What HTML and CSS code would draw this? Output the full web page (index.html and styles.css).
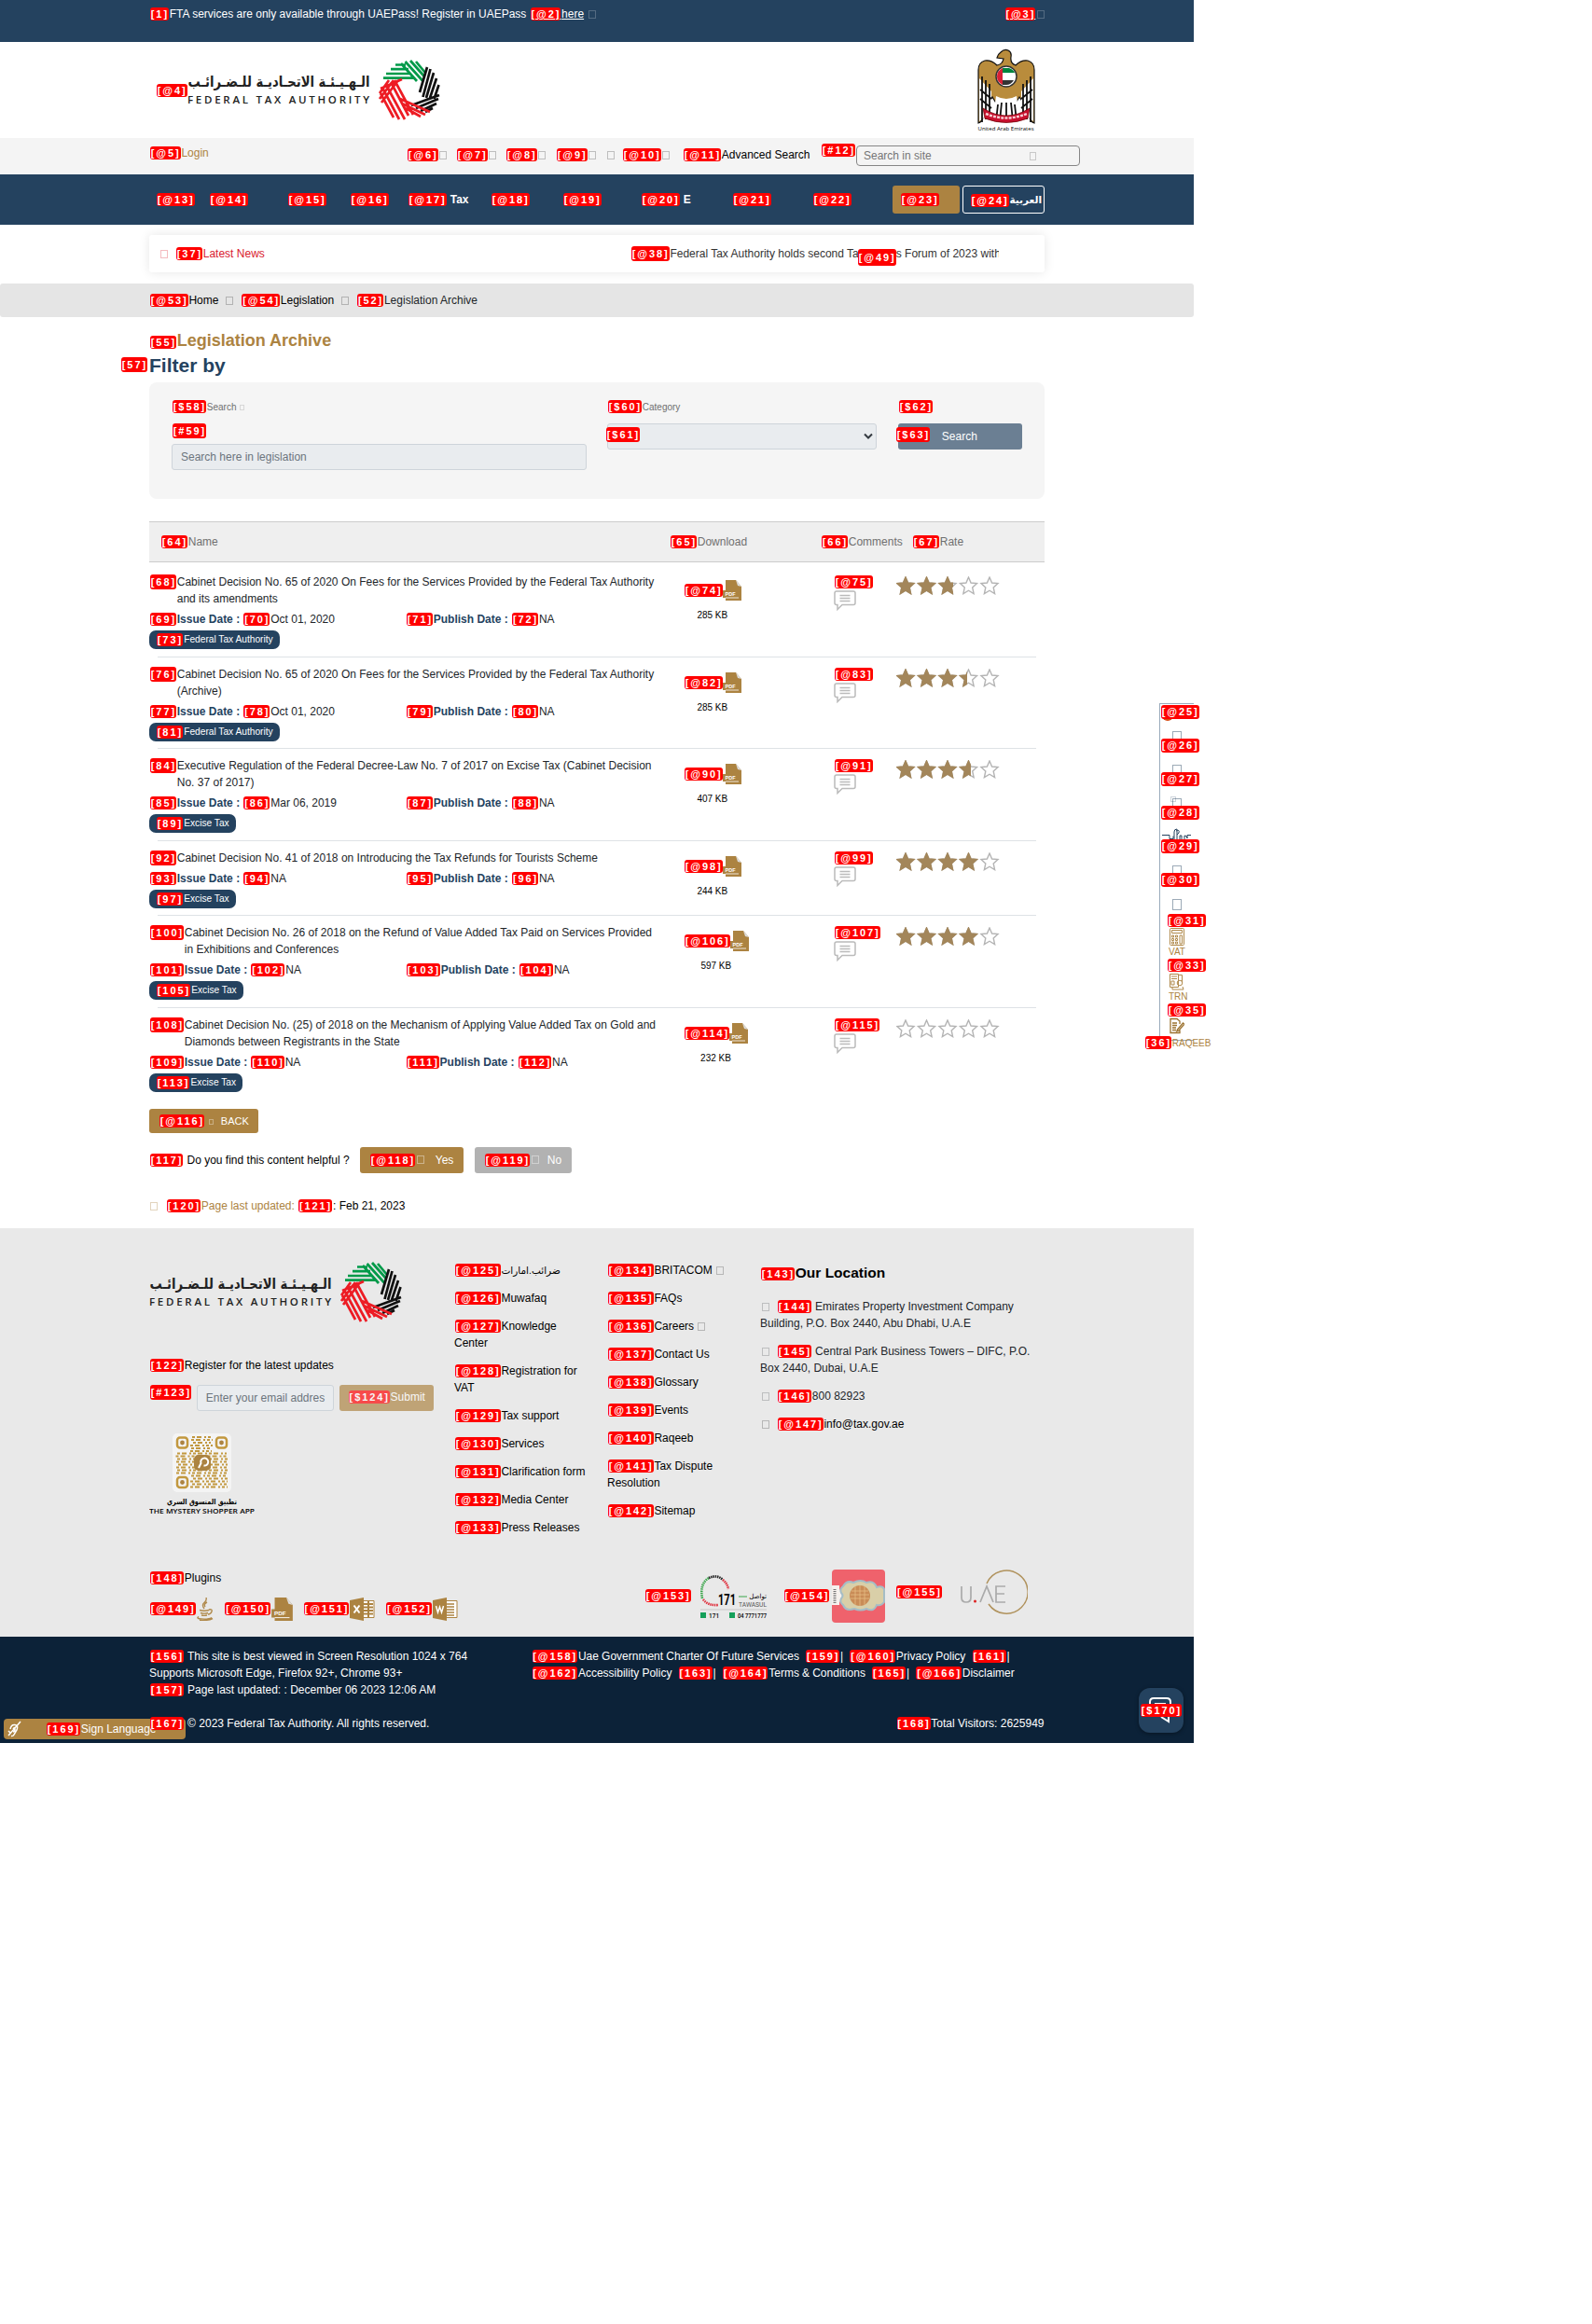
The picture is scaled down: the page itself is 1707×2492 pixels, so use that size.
FILE: index.html
```html
<!DOCTYPE html>
<html lang="en">
<head>
<meta charset="utf-8">
<title>Legislation Archive</title>
<link rel="stylesheet" href="styles.css">
</head>
<body>
<svg class="defs" width="0" height="0">
  <symbol id="logo" viewBox="0 0 271 66">
    <text x="195.500" y="29" class="logo-ar" textLength="195" lengthAdjust="spacingAndGlyphs">الـهـيـئـة الاتحـاديـة للـضـرائـب</text>
    <text x="0" y="47.3" class="logo-en" textLength="195">FEDERAL TAX AUTHORITY</text>
    <g fill="none" stroke-width="2.7">
      <path stroke="#009a49" d="M223 5.500h11M218 10.200h19M213 15h26M210 19.600h33M229 4l17 19M233.500 2l19 21M239 1l15 17M245 2l10 12"/>
      <path stroke="#111" d="M257 8l-8 27M260.500 10l-8 30M264 14l-8 27M267 20l-7 21M269.500 27l-5 15M270 38l-30 11M269 42l-24 10M267 47l-17 8M263 52l-8 4"/>
      <path stroke="#ed1c24" d="M230 21l-23 10M226 22l-18 24M221 22l-15 20M216 22l-10 14M207 36l14 26M209 30l18 34M213 27l20 37M218 24l19 36M222 22l20 37M228 42l32 14M230 47l25 12M234 52l16 9"/>
    </g>
  </symbol>
  <symbol id="pdf" viewBox="0 0 20 22">
    <path fill="#ac8341" d="M3 0h11l6 7v15H3v-3H0v-8h3z"/><path fill="#ddd" d="M14 0l6 7-4-1z"/>
    <path stroke="#fff" stroke-width=".8" d="M3 19h14"/><text x="2.500" y="16.500" class="pdf-t">PDF</text>
  </symbol>
  <symbol id="note" viewBox="0 0 24 22">
    <path fill="#fff" stroke="#bbb" stroke-width="1.500" d="M3 1h18q2 0 2 2v10.500q0 2-2 2H9L4 20.500v-5H3q-2 0-2-2V3q0-2 2-2z"/>
    <path stroke="#bbb" stroke-width="1.500" d="M6.500 5.500h11M6.500 8.500h11M6.500 11.500h11"/>
  </symbol>
  <symbol id="stars" viewBox="0 0 112 20">
    <path id="s" d="M10 1l2.600 6 6.400.6-4.800 4.300 1.400 6.700L10 15.200l-5.600 3.400 1.400-6.700L1 7.600 7.400 7z"/>
    <use href="#s" x="22.500"/><use href="#s" x="45"/><use href="#s" x="67.500"/><use href="#s" x="90"/>
  </symbol>
</svg>

<div class="page">
  <div class="topbar"><div class="wrap topbar-in">
    <div><b class="k">[1]</b>FTA services are only available through UAEPass! Register in UAEPass <a class="under"><b class="k">[@2]</b>here</a> <i class="tofu gap5"></i></div>
    <div class="under"><b class="k">[@3]</b><i class="tofu"></i></div>
  </div></div>

  <div class="brand wrap">
    <div class="brand-left"><b class="k">[@4]</b><svg class="logo"><use href="#logo"/></svg></div>
    <svg class="eagle" viewBox="0 0 62 90">
      <path fill="#b98c3c" stroke="#111" stroke-width="1.200" d="M25 4q4-4 8-2 4 2 3 7-1 7 5 9 6-6 13-5 7 2 7 10v57q-4-1-6-9-4-2-4-10l-6-9-8 13H24l-8-13-5 9q0 8-4 10-2 8-6 9V23q0-8 7-10 7-1 13 5 6-1 7-7l-7-1q1-4 4-6z"/>
      <path fill="#fff" d="M20 51q11 6 22 0l3 22H17zM2 32l13 14v22L2 78zM60 32L47 46v22l13 10z"/>
      <path fill="none" stroke="#111" stroke-width="1.800" d="M5 30v49M9 34v42M13 38v32M57 30v49M53 34v42M49 38v32M22 60l-2 18M26 58l-2 20M31 58v20M36 58l2 20M40 60l2 18M3 44l12 10M3 54l12 10M59 44L47 54M59 54L47 64"/>
      <path fill="#c8102e" stroke="#600" stroke-width=".7" d="M6 64q25 16 50 0l-2 11q-23 9-46 0z"/>
      <path stroke="#f6cdd2" stroke-width="2.500" stroke-dasharray="3 1.200" fill="none" d="M9 70q22 9 44 0"/>
      <circle cx="31" cy="30" r="11" fill="#fff" stroke="#333" stroke-width="1.500"/><path fill="#00843d" d="M27 21h7q5 2 6 5H27z"/><path fill="#333" d="M27 34h12q-3 5-8 5h-4z"/><path fill="#d91f35" d="M27 21v18q-6-3-6-9t6-9z"/>
      <text x="0.500" y="88" class="eagle-t" textLength="60">United Arab Emirates</text>
    </svg>
  </div>

  <div class="utility"><div class="wrap utility-in">
    <span class="gold login"><b class="k">[@5]</b>Login</span>
    <span><b class="k">[@6]</b><i class="tofu"></i></span><span><b class="k">[@7]</b><i class="tofu"></i></span><span><b class="k">[@8]</b><i class="tofu"></i></span><span><b class="k">[@9]</b><i class="tofu"></i></span><span><i class="tofu"></i></span><span><b class="k">[@10]</b><i class="tofu"></i></span><span><b class="k">[@11]</b>Advanced Search</span>
    <span class="k12"><b class="k">[#12]</b></span>
    <div class="site-search"><span>Search in site</span><i class="tofu"></i></div>
  </div></div>

  <div class="nav"><div class="wrap nav-in">
    <span><b class="k">[@13]</b></span><span><b class="k">[@14]</b></span><span><b class="k">[@15]</b></span><span><b class="k">[@16]</b></span><span><b class="k">[@17]</b>&nbsp;Tax</span><span><b class="k">[@18]</b></span><span><b class="k">[@19]</b></span><span><b class="k">[@20]</b>&nbsp;E</span><span><b class="k">[@21]</b></span><span><b class="k">[@22]</b></span>
    <span class="nav-btn gold-btn"><b class="k">[@23]</b></span><span class="nav-btn lang"><b class="k">[@24]</b><bdi>العربية</bdi></span>
  </div></div>

  <div class="news wrap">
    <i class="tofu red"></i><span class="red latest"><b class="k">[37]</b>Latest News</span>
    <div class="ticker"><b class="k tall">[@38]</b>Federal Tax Authority holds second Tax Agents Forum of 2023 with</div>
    <b class="k k49 tall">[@49]</b>
  </div>

  <div class="crumbs"><div class="wrap crumbs-in"><span><b class="k">[@53]</b>Home</span><i class="tofu"></i><span><b class="k">[@54]</b>Legislation</span><i class="tofu"></i><span class="soft"><b class="k">[52]</b>Legislation Archive</span></div></div>

  <main class="wrap">
    <h1><b class="k">[55]</b>Legislation Archive</h1>
    <h2><b class="k tall">[57]</b>Filter by</h2>
    <div class="filter">
      <div class="f1"><label><b class="k">[$58]</b>Search <i class="tofu sm"></i></label><div class="k59"><b class="k tall">[#59]</b></div><div class="field">Search here in legislation</div></div>
      <div class="f2"><label><b class="k">[$60]</b>Category</label><div class="field select"><b class="k tall k61">[$61]</b><svg width="10" height="8"><path d="M1 1.500l4 4 4-4" fill="none" stroke="#343a40" stroke-width="2"/></svg></div></div>
      <div class="f3"><label><b class="k">[$62]</b></label><div class="search-btn"><b class="k tall k61">[$63]</b>Search</div></div>
    </div>

    <div class="thead"><span><b class="k">[64]</b>Name</span><span><b class="k">[65]</b>Download</span><span><b class="k">[66]</b>Comments</span><span><b class="k">[67]</b>Rate</span></div>

    <div class="row">
      <div class="info"><div class="title"><b class="k tall">[68]</b><p>Cabinet Decision No. 65 of 2020 On Fees for the Services Provided by the Federal Tax Authority and its amendments</p></div>
        <div class="dates"><span><b class="k">[69]</b><strong>Issue Date :</strong> <b class="k">[70]</b>Oct 01, 2020</span><span><b class="k">[71]</b><strong>Publish Date :</strong> <b class="k">[72]</b>NA</span></div>
        <span class="pill"><b class="k">[73]</b>Federal Tax Authority</span></div>
      <div class="dl"><div><b class="k">[@74]</b><svg class="pdf"><use href="#pdf"/></svg></div><small>285 KB</small></div>
      <div class="cm"><b class="k">[@75]</b><svg class="note"><use href="#note"/></svg></div>
      <div class="rate"><svg class="st"><use href="#stars"/></svg><div class="fill" style="width:61px"><svg class="st"><use href="#stars"/></svg></div></div>
    </div>
    <div class="row">
      <div class="info"><div class="title"><b class="k tall">[76]</b><p>Cabinet Decision No. 65 of 2020 On Fees for the Services Provided by the Federal Tax Authority (Archive)</p></div>
        <div class="dates"><span><b class="k">[77]</b><strong>Issue Date :</strong> <b class="k">[78]</b>Oct 01, 2020</span><span><b class="k">[79]</b><strong>Publish Date :</strong> <b class="k">[80]</b>NA</span></div>
        <span class="pill"><b class="k">[81]</b>Federal Tax Authority</span></div>
      <div class="dl"><div><b class="k">[@82]</b><svg class="pdf"><use href="#pdf"/></svg></div><small>285 KB</small></div>
      <div class="cm"><b class="k">[@83]</b><svg class="note"><use href="#note"/></svg></div>
      <div class="rate"><svg class="st"><use href="#stars"/></svg><div class="fill" style="width:76px"><svg class="st"><use href="#stars"/></svg></div></div>
    </div>
    <div class="row">
      <div class="info"><div class="title"><b class="k tall">[84]</b><p>Executive Regulation of the Federal Decree-Law No. 7 of 2017 on Excise Tax (Cabinet Decision No. 37 of 2017)</p></div>
        <div class="dates"><span><b class="k">[85]</b><strong>Issue Date :</strong> <b class="k">[86]</b>Mar 06, 2019</span><span><b class="k">[87]</b><strong>Publish Date :</strong> <b class="k">[88]</b>NA</span></div>
        <span class="pill"><b class="k">[89]</b>Excise Tax</span></div>
      <div class="dl"><div><b class="k">[@90]</b><svg class="pdf"><use href="#pdf"/></svg></div><small>407 KB</small></div>
      <div class="cm"><b class="k">[@91]</b><svg class="note"><use href="#note"/></svg></div>
      <div class="rate"><svg class="st"><use href="#stars"/></svg><div class="fill" style="width:80px"><svg class="st"><use href="#stars"/></svg></div></div>
    </div>
    <div class="row short">
      <div class="info"><div class="title"><b class="k tall">[92]</b><p>Cabinet Decision No. 41 of 2018 on Introducing the Tax Refunds for Tourists Scheme</p></div>
        <div class="dates"><span><b class="k">[93]</b><strong>Issue Date :</strong> <b class="k">[94]</b>NA</span><span><b class="k">[95]</b><strong>Publish Date :</strong> <b class="k">[96]</b>NA</span></div>
        <span class="pill"><b class="k">[97]</b>Excise Tax</span></div>
      <div class="dl"><div><b class="k">[@98]</b><svg class="pdf"><use href="#pdf"/></svg></div><small>244 KB</small></div>
      <div class="cm"><b class="k">[@99]</b><svg class="note"><use href="#note"/></svg></div>
      <div class="rate"><svg class="st"><use href="#stars"/></svg><div class="fill" style="width:89px"><svg class="st"><use href="#stars"/></svg></div></div>
    </div>
    <div class="row">
      <div class="info"><div class="title"><b class="k tall">[100]</b><p>Cabinet Decision No. 26 of 2018 on the Refund of Value Added Tax Paid on Services Provided in Exhibitions and Conferences</p></div>
        <div class="dates"><span><b class="k">[101]</b><strong>Issue Date :</strong> <b class="k">[102]</b>NA</span><span><b class="k">[103]</b><strong>Publish Date :</strong> <b class="k">[104]</b>NA</span></div>
        <span class="pill"><b class="k">[105]</b>Excise Tax</span></div>
      <div class="dl"><div><b class="k">[@106]</b><svg class="pdf"><use href="#pdf"/></svg></div><small>597 KB</small></div>
      <div class="cm"><b class="k">[@107]</b><svg class="note"><use href="#note"/></svg></div>
      <div class="rate"><svg class="st"><use href="#stars"/></svg><div class="fill" style="width:89px"><svg class="st"><use href="#stars"/></svg></div></div>
    </div>
    <div class="row last">
      <div class="info"><div class="title"><b class="k tall">[108]</b><p>Cabinet Decision No. (25) of 2018 on the Mechanism of Applying Value Added Tax on Gold and Diamonds between Registrants in the State</p></div>
        <div class="dates"><span><b class="k">[109]</b><strong>Issue Date :</strong> <b class="k">[110]</b>NA</span><span><b class="k">[111]</b><strong>Publish Date :</strong> <b class="k">[112]</b>NA</span></div>
        <span class="pill"><b class="k">[113]</b>Excise Tax</span></div>
      <div class="dl"><div><b class="k">[@114]</b><svg class="pdf"><use href="#pdf"/></svg></div><small>232 KB</small></div>
      <div class="cm"><b class="k">[@115]</b><svg class="note"><use href="#note"/></svg></div>
      <div class="rate"><svg class="st"><use href="#stars"/></svg></div>
    </div>

    <div class="back"><b class="k">[@116]</b><i class="tofu sm"></i><span>BACK</span></div>
    <div class="helpful"><span class="q"><b class="k">[117]</b> Do you find this content helpful ?</span><div class="hb yes"><b class="k">[@118]</b><i class="tofu"></i><span>Yes</span></div><div class="hb no"><b class="k">[@119]</b><i class="tofu"></i><span>No</span></div></div>
    <div class="updated"><i class="tofu gold"></i><span><span class="gold"><b class="k">[120]</b>Page last updated:</span> <b class="k">[121]</b>: Feb 21, 2023</span></div>
  </main>

  <footer>
    <div class="wrap foot">
      <div class="fc1">
        <svg class="logo"><use href="#logo"/></svg>
        <div class="reg"><b class="k">[122]</b>Register for the latest updates</div>
        <div class="mail"><b class="k tall">[#123]</b><div class="field email">Enter your email addres</div><div class="submit"><b class="k">[$124]</b>Submit</div></div>
        <svg class="qr" viewBox="0 0 114 90">
          <rect x="25" y="0" width="63" height="63" rx="5" fill="#f4f4f4"/>
          <g fill="none" stroke="#c2983f" stroke-width="2"><path stroke-dasharray="3 2 5 3 2 2" d="M46 4h20M45 7h23M47 10h19M44 13h24M45 16h20M44 19h23M30 21.500h53M28.500 24.500h55M30 27.500h54M29 30.500h55M31 33.500h53M29 36.500h55M30 39.500h54M29 42.500h54M45 45.500h38M47 48.500h37M44 51.500h40M46 54.500h38M44 57.500h40"/></g>
          <g fill="#f4f4f4" stroke="#c2983f" stroke-width="2.500"><rect x="30" y="4.500" width="11" height="11" rx="3"/><rect x="72" y="4.500" width="11" height="11" rx="3"/><rect x="30" y="47" width="11" height="11" rx="3"/></g>
          <g fill="#ac8341"><circle cx="35.500" cy="10" r="2.400"/><circle cx="77.500" cy="10" r="2.400"/><circle cx="35.500" cy="52.500" r="2.400"/><rect x="48" y="23" width="18" height="17" rx="5"/></g>
          <path d="M53 37l2.500-5a4 4 0 1 1 3 2.500" fill="none" stroke="#fff" stroke-width="2"/>
          <text x="94" y="76" class="qr-ar" textLength="75" lengthAdjust="spacingAndGlyphs">تطبيق المتسوق السري</text>
          <text x="0" y="86" class="qr-en" textLength="113" lengthAdjust="spacingAndGlyphs">THE MYSTERY SHOPPER APP</text>
        </svg>
      </div>
      <ul class="c2"><li class="ar"><b class="k">[@125]</b><bdi>ضرائب.امارات</bdi></li><li><b class="k">[@126]</b>Muwafaq</li><li><b class="k">[@127]</b>Knowledge Center</li><li><b class="k">[@128]</b>Registration for VAT</li><li><b class="k">[@129]</b>Tax support</li><li><b class="k">[@130]</b>Services</li><li><b class="k">[@131]</b>Clarification form</li><li><b class="k">[@132]</b>Media Center</li><li><b class="k">[@133]</b>Press Releases</li></ul>
      <ul class="c3"><li><b class="k">[@134]</b>BRITACOM <i class="tofu"></i></li><li><b class="k">[@135]</b>FAQs</li><li><b class="k">[@136]</b>Careers <i class="tofu"></i></li><li><b class="k">[@137]</b>Contact Us</li><li><b class="k">[@138]</b>Glossary</li><li><b class="k">[@139]</b>Events</li><li><b class="k">[@140]</b>Raqeeb</li><li><b class="k">[@141]</b>Tax Dispute Resolution</li><li><b class="k">[@142]</b>Sitemap</li></ul>
      <div class="c4"><h3><b class="k">[143]</b>Our Location</h3><ul><li><i class="tofu"></i><b class="k">[144]</b> Emirates Property Investment Company Building, P.O. Box 2440, Abu Dhabi, U.A.E</li><li><i class="tofu"></i><b class="k">[145]</b> Central Park Business Towers – DIFC, P.O. Box 2440, Dubai, U.A.E</li><li><i class="tofu"></i><b class="k">[146]</b>800 82923</li><li class="dark"><i class="tofu"></i><b class="k">[@147]</b>info@tax.gov.ae</li></ul></div>
    </div>
    <div class="wrap plugs">
      <div><div><b class="k">[148]</b>Plugins</div>
        <div class="plug-row">
          <span><b class="k">[@149]</b><svg width="19" height="25" viewBox="0 0 19 25" fill="none" stroke="#b08a4c" stroke-width="1.400"><path d="M11 0q1 3-2 5.500T9 12M12 5q-4 2-2 5M4 13.500q5 1.500 10 0M5 16.500q4 1.200 8 0M6 19q3 .8 6 0M14 13q4-1 3 2t-4 3M3 20.500q-3 2 3 2.500 8 .5 11-1.500M4 24.500q9 .5 14-2"/></svg></span>
          <span><b class="k">[@150]</b><svg width="23" height="25"><use href="#pdf"/></svg></span>
          <span><b class="k">[@151]</b><svg width="27" height="25" viewBox="0 0 27 25"><path fill="#fff" stroke="#ac8341" d="M13 3.500h13v18H13z"/><path stroke="#ac8341" stroke-width="2" d="M14 7h11M14 10.500h11M14 14h11M14 17.500h11M20 4v17"/><path fill="#ac8341" d="M0 3l15-3v25L0 22z"/><path stroke="#fff" stroke-width="2" d="M4.500 8.500l6 8M10.500 8.500l-6 8"/></svg></span>
          <span><b class="k">[@152]</b><svg width="27" height="25" viewBox="0 0 27 25"><path fill="#fff" stroke="#ac8341" d="M13 3.500h13v18H13z"/><path stroke="#ac8341" stroke-width="1.500" d="M14 7h9M14 10h9M14 13h9M14 16h9M14 19h9"/><path fill="#ac8341" d="M0 3l15-3v25L0 22z"/><path fill="none" stroke="#fff" stroke-width="1.500" d="M3.500 9l2 7 2-6 2 6 2-7"/></svg></span>
        </div></div>
      <div class="partners">
        <b class="k p1">[@153]</b>
        <svg width="72" height="46" viewBox="0 0 72 46"><g fill="none" stroke-width="2.600" stroke-dasharray="1.500 .8"><path stroke="#3aa54a" d="M2 25Q-1 9 9 3"/><path stroke="#222" d="M9 3q9-4 15 2"/><path stroke="#e0313f" d="M24 5q5 4 6 10M3 26q5 7 16 6"/></g><text x="19" y="32" class="t171" textLength="19" lengthAdjust="spacingAndGlyphs">171</text><path stroke="#3aa54a" d="M41 23h9"/><text x="71" y="25" text-anchor="end" class="t-ar">تواصل</text><text x="41" y="34" class="t-en" textLength="30" lengthAdjust="spacingAndGlyphs">TAWASUL</text><path stroke="#bbb" stroke-width=".7" d="M0 37h71"/><rect y="40" width="6" height="6" fill="#16a05a"/><rect x="31" y="40" width="6" height="6" fill="#16a05a"/><text x="9" y="45.500" class="t-n">171</text><text x="40" y="45.500" class="t-n" textLength="31" lengthAdjust="spacingAndGlyphs">04 7771777</text></svg>
        <b class="k p2">[@154]</b>
        <svg width="57" height="57" viewBox="0 0 57 57"><rect width="57" height="57" rx="4" fill="#ef626c"/><path fill="#f6f1ee" d="M0 17h8v4l6 7-6 7v3H0z"/><path stroke="#777" stroke-width="3" stroke-dasharray="1 1" d="M3 21v15"/><path fill="#d9cfa8" stroke="#a5bdc6" stroke-width="2" d="M12 18q4-7 11-4 8-4 14 0 8-3 11 5 6-2 8 2v14q-3 4-8 3-3 8-11 4-6 3-13 0-9 3-12-4-4-3-2-7 3-3 0-6-2-4 2-7z"/><ellipse cx="30" cy="28" rx="11" ry="11" fill="#c98c57"/><path fill="none" stroke="#e9c389" stroke-width=".7" d="M21 23h18M20 27h20M20 31h20M25 18v20M30 17v22M35 18v20"/></svg>
        <b class="k p3">[@155]</b>
        <svg width="72" height="48" viewBox="0 0 72 48"><path fill="none" stroke="#b0925c" stroke-width="1.500" d="M28 15a23 23 0 1 1 2 22"/><path fill="none" stroke="#aaa" stroke-width="1.700" d="M1 18v12q0 5 5 5t5-5V18M21 35l7-17 7 17M48 18H38v17h10M38 26h9"/><circle cx="15.500" cy="34" r="1.500" fill="#d22"/></svg>
      </div>
    </div>
  </footer>

  <div class="bottom"><div class="wrap bottom-in">
    <div class="b1"><b class="k">[156]</b> This site is best viewed in Screen Resolution 1024 x 764 Supports Microsoft Edge, Firefox 92+, Chrome 93+<br><b class="k">[157]</b> Page last updated: : December 06 2023 12:06 AM</div>
    <div class="b2"><span><b class="k">[@158]</b>Uae Government Charter Of Future Services&nbsp; <b class="k">[159]</b>|&nbsp; <b class="k">[@160]</b>Privacy Policy&nbsp; <b class="k">[161]</b>|</span><br><span><b class="k">[@162]</b>Accessibility Policy&nbsp; <b class="k">[163]</b>|&nbsp; <b class="k">[@164]</b>Terms &amp; Conditions&nbsp; <b class="k">[165]</b>|&nbsp; <b class="k">[@166]</b>Disclaimer</span></div>
    <div class="copy"><b class="k">[167]</b> © 2023 Federal Tax Authority. All rights reserved.</div>
    <div class="visits"><b class="k">[168]</b>Total Visitors: 2625949</div>
  </div></div>

  <div class="sign"><svg width="15" height="18" viewBox="0 0 15 18" fill="none" stroke="#fff" stroke-width="1.500"><path d="M3 9q1-5 5-4.500t2 5.500l-3 5q-1 2-3 1.500M6 9q2-3 2 0t-2 3M1 16L14 1M1 11l2 2"/></svg><span><b class="k">[169]</b>Sign Language</span></div>
  <div class="chat"><svg width="26" height="28" viewBox="0 0 26 28" fill="none" stroke="#fff" stroke-width="2"><path d="M2 14V5q0-4 4-4h14q4 0 4 4v10M7 7h12M14 21l8 5v-6"/></svg><b class="k">[$170]</b></div>

  <div class="side">
    <i class="blob"></i>
    <div class="s"><b class="k">[@25]</b><i class="tofu big"></i></div>
    <div class="s"><b class="k">[@26]</b><i class="tofu big"></i></div>
    <div class="s"><b class="k">[@27]</b><i class="tofu big"></i><i class="tofu tiny"></i></div>
    <div class="s"><b class="k">[@28]</b><svg class="squig" width="32" height="13" viewBox="0 0 32 13" fill="none" stroke="#24425f"><path d="M0 7.500h8v4h4v-3M13 12V4q0-3 3-3v6M15 3q4-2 3 2l-2 2v5M19 12V8h2v4M24 12V8q3 0 3 3v-3.500h4"/></svg></div>
    <div class="s"><b class="k">[@29]</b><i class="tofu big"></i></div>
    <div class="s"><b class="k">[@30]</b><i class="tofu big"></i></div>
    <div class="t"><b class="k">[@31]</b><svg width="16" height="19" viewBox="0 0 16 19" fill="none" stroke="#b08a4c"><rect x=".5" y=".5" width="15" height="18" rx="1"/><path d="M2.500 2.500h11v3h-11zM2.500 8h2v2h-2zM6.500 8h2v2h-2zM2.500 11.500h2v2h-2zM6.500 11.500h2v2h-2zM2.500 15h2v2h-2zM6.500 15h2v2h-2zM11 8h2.500v9H11z"/></svg><span>VAT</span></div>
    <div class="t"><b class="k">[@33]</b><svg width="16" height="19" viewBox="0 0 16 19" fill="none" stroke="#b08a4c"><path d="M.5 1.500h9v14h-9zM2 4h6M2 6.500h6M9.500 2.500h4v8M3 15v3h12l-1-3M2 9h3v4H2z"/><circle cx="11" cy="11" r="2.800"/></svg><span>TRN</span></div>
    <div class="t"><b class="k">[@35]</b><svg width="16" height="19" viewBox="0 0 16 19" fill="none" stroke="#9c7330" stroke-width="1.300"><path d="M11 7V4L8 1.500H1v15h10v-3M3 6h5M3 8.500h5M3 11h4M3 13.500h4M8.500 13l6-7 1.300 1.200-6 7-2 .5z"/></svg></div>
    <div class="raq"><b class="k">[36]</b>RAQEEB</div>
  </div>
</div>
</body>
</html>
```
FILE: styles.css
```css
* { box-sizing: border-box; }
body { margin: 0; background: #fff; color: #000; font: 12px/18px "Liberation Sans", "DejaVu Sans", sans-serif; }
svg { display: block; flex: none; }
.defs { position: absolute; }
ul { list-style: none; margin: 0; padding: 0; }
p { margin: 0; }
.page { position: relative; width: 1280px; height: 1869px; }
.wrap { width: 960px; margin: 0 auto; }

.k { display: inline; background: #f00; color: #fff; font: bold 11px/14px "Liberation Sans", sans-serif; letter-spacing: 1.9px; border-radius: 3px; margin: 0 .8px 0 1px; padding: 1px 0 1px .8px; white-space: nowrap; text-decoration: inherit; }
.k.tall { padding-top: 2px; padding-bottom: 2px; }
.tofu { display: inline-block; width: 8px; height: 9px; border: 1px solid currentColor; opacity: .22; vertical-align: -1px; margin-left: 1px; flex: none; }
.tofu.sm { width: 5px; height: 6px; vertical-align: 0; }
.gap5 { margin-left: 2px; }
.gold { color: #ac8341; }
.red { color: #d9202e; }
.soft { color: #212529; }
.under { text-decoration: underline; }

.topbar { background: #24425f; color: #fff; height: 45px; padding-top: 6px; }
.topbar-in { display: flex; justify-content: space-between; }
.brand { height: 103px; display: flex; justify-content: space-between; align-items: flex-start; padding: 7px 10px 0 7px; }
.brand-left { display: flex; align-items: center; padding-top: 12px; }
.logo { width: 271px; height: 66px; }
.brand-left .k { line-height: 12px; }
.logo-ar { font: bold 16px "DejaVu Sans", sans-serif; fill: #222; direction: rtl; text-anchor: start; }
.logo-en { font: 600 11.500px "Open Sans", sans-serif; fill: #222; }
.eagle { width: 62px; height: 90px; }
.eagle-t { font: 6px "Open Sans", sans-serif; }

.utility { background: #f4f4f4; height: 39px; }
.utility-in { display: grid; grid-template-columns: 276px 53px 53px 54px 54px 17px 65px 148px 38px 240px; padding-top: 8px; height: 39px; line-height: 21px; white-space: nowrap; }
.login { margin-top: -2px; }
.k12 { margin-top: -5px; }
.site-search { border: 1px solid #868686; border-radius: 4px; height: 22px; padding: 0 46px 0 7px; color: #757575; display: flex; justify-content: space-between; align-items: center; }
.site-search .tofu { width: 7px; opacity: .35; }

.nav { background: #24425f; height: 54px; color: #fff; font-weight: bold; }
.nav-in { display: grid; grid-template-columns: 57px 84px 67px 62px 89px 77px 84px 98px 86px 86px 75px 88px; padding-left: 7px; width: 960px; align-items: center; height: 54px; white-space: nowrap; line-height: 14px; }
.nav-btn { height: 30px; border-radius: 3px; padding: 8px; }
.gold-btn { background: #ac8341; width: 72px; }
.lang { border: 1px solid #fff; padding: 0 7px; font-weight: bold; font-size: 10.500px; display: flex; align-items: center; }
.lang .k { line-height: 12px; margin-top: 2px; }
.ar { display: flex; align-items: center; height: 18px; font-size: 10.500px; }
.ar .k { line-height: 12px; margin-top: 1px; }

.news { height: 40px; margin-top: 11px; border-radius: 3px; box-shadow: 0 0 12px rgba(0,0,0,.1); display: flex; align-items: center; padding-left: 11px; position: relative; }
.news .tofu { opacity: .3; }
.latest { margin-left: 8px; width: 488px; }
.ticker { width: 395px; overflow: hidden; white-space: nowrap; color: #333; }
.k49 { position: absolute; left: 759px; top: 15px; }

.crumbs { margin-top: 12px; height: 36px; background: #e5e5e5; border-radius: 3px; }
.crumbs-in { display: flex; align-items: center; height: 36px; }
.crumbs .tofu { margin: 0 8px; }

h1 { margin: 14px 0 0; font-size: 18px; line-height: 22px; color: #ac8341; }
h2 { margin: 3px 0 0 -31px; font-size: 21px; line-height: 26px; color: #24425f; }
h2 .k { vertical-align: 4px; margin-right: 2px; }
.filter { margin-top: 5px; height: 125px; background: #f5f5f5; border-radius: 8px; padding: 17px 24px 0; display: grid; grid-template-columns: 467px 312px 133px; color: #6f6f6f; }
.filter label { display: block; font-size: 10px; height: 27px; line-height: 20px; }
.k59 { height: 22px; line-height: 17px; }
.field { background: #e9ecef; border: 1px solid #ced4da; border-radius: 3px; height: 28px; color: #6c757d; padding: 4px 9px; white-space: nowrap; }
.f1 .field { width: 445px; }
.select { width: 289px; display: flex; justify-content: space-between; align-items: center; padding: 0 3px 0 0; }
.k61 { margin-left: -2px; height: 16px; line-height: 12px; margin-top: -4px; }
.search-btn { height: 28px; border-radius: 3px; background: #6b7f93; color: #fff; display: flex; align-items: center; gap: 12px; }

.thead { margin-top: 24px; height: 44px; background: #efefef; border: solid #ccc; border-width: 1px 0; display: grid; grid-template-columns: 546px 162px 98px 1fr; padding-left: 12px; line-height: 42px; color: #6f6f6f; }
.row { display: grid; grid-template-columns: 573px 161px 67px 1fr; height: 98.700px; position: relative; padding-top: 9px; color: #212529; }
.thead + .row { padding-top: 12px; height: 101.700px; }
.row.short { height: 80px; }
.row:not(.last)::after { content: ""; position: absolute; left: 9px; right: 9px; bottom: 0; border-bottom: 1px solid #dee2e6; }
.title { display: flex; width: 544px; }
.title p { flex: 1; }
.title .k { height: 16px; margin-top: 1px; line-height: 12px; }
.dates { display: grid; grid-template-columns: 275px 1fr; margin-top: 4px; }
.dates strong { color: #24425f; }
.pill { display: inline-flex; align-items: center; height: 20px; margin-top: 3px; padding: 0 7px; border-radius: 7px; background: #24425f; color: #fff; font-size: 10.200px; }
.pill .k { line-height: 12px; margin-right: 1.200px; }
.dl { display: flex; flex-direction: column; align-items: flex-start; padding-top: 7px; width: max-content; }
.dl div { display: flex; align-items: center; }
.dl .k, .cm .k { line-height: 12px; }
.dl .k { margin-right: 0; }
.pdf { width: 20px; height: 22px; }
.pdf-t { font: bold 5.500px "Liberation Sans", sans-serif; fill: #fff; }
.dl small { font-size: 10px; line-height: 14px; margin-top: 9px; align-self: center; color: #000; }
.cm { padding-top: 2px; line-height: 14px; }
.note { width: 24px; height: 22px; margin-top: 2px; }
.rate { position: relative; padding-top: 3px; }
.st { width: 112px; height: 20px; fill: #fff; stroke: #b4b4b4; stroke-width: 1.400px; }
.fill { position: absolute; left: 0; top: 3px; overflow: hidden; }
.thead + .row .fill { top: 3px; }
.fill .st { fill: #a3865a; stroke: #a3865a; }
.last { height: 108px; }

.back { display: flex; align-items: center; width: 117px; height: 26px; padding-left: 10px; background: #ac8341; color: #fff; border-radius: 3px; font-size: 11px; }
.back .k, .hb .k { line-height: 12px; }
.back .tofu { margin: 2px 8px 0 4px; opacity: .35; }
.helpful { display: flex; align-items: center; margin-top: 15px; height: 28px; }
.q { width: 226px; }
.hb { height: 28px; border-radius: 3px; padding-left: 10px; display: flex; align-items: center; color: #fff; }
.hb .tofu { opacity: .4; }
.yes { width: 111px; background: #ac8341; margin-right: 12px; }
.yes span { margin-left: 12px; }
.no { width: 104px; background: #b2b2b2; }
.no span { margin-left: 9px; }
.updated { margin-top: 26px; height: 33px; }
.updated .tofu { margin-right: 9px; opacity: .35; }

footer { background: #e9e9e9; height: 438px; padding-top: 36px; }
.foot { display: grid; grid-template-columns: 327px 164px 164px 305px; height: 330px; }
.foot li { margin-bottom: 12px; }
.c2 { width: 147px; }
.c3 { width: 147px; }
.c4 { color: #212529; }
.c4 h3 { margin: 3px 0 18px; font-size: 15.500px; line-height: 18px; color: #000; }
.c4 .tofu { margin: 0 8px 0 2px; }
.dark { color: #000; }
.reg { margin-top: 36px; }
.mail { display: flex; align-items: flex-start; margin-top: 12px; }
.email { width: 147px; margin: 0 6px 0 5px; overflow: hidden; }
.mail > .k { margin-top: 0; height: 16px; line-height: 12px; }
.submit { width: 101px; height: 28px; background: #ac8341; opacity: .68; border-radius: 3px; color: #fff; padding: 4px 9px; white-space: nowrap; }
.qr { width: 114px; height: 90px; margin-top: 24px; }
.qr-ar { font: bold 8px "DejaVu Sans", sans-serif; direction: rtl; text-anchor: start; }
.qr-en { font: 600 7.500px "Open Sans", sans-serif; }
.plugs { display: flex; justify-content: space-between; }
.plug-row { display: flex; gap: 11px; margin-top: 12px; }
.plug-row span { display: flex; align-items: center; }
.plug-row .k, .partners .k { line-height: 12px; }
.partners { display: flex; align-items: flex-start; width: 429px; }
.p1 { margin-top: 21px; margin-right: 10px; }
.partners svg:nth-of-type(1) { margin-top: 6px; }
.p2 { margin: 21px 3px 0 18px; }
.p3 { margin: 17px 20px 0 12px; }
.t171 { font: bold 17px Roboto, sans-serif; }
.t-ar { font: 7px "DejaVu Sans", sans-serif; }
.t-en { font: 8px Roboto, sans-serif; fill: #555; }
.t-n { font: 500 6.500px Roboto, sans-serif; }

.bottom { background: #0c2238; color: #fff; height: 114px; padding-top: 12px; }
.bottom-in { display: grid; grid-template-columns: 409.500px 550px; grid-template-rows: 72px 18px; position: relative; z-index: 3; }
.b1 { width: 350px; }
.b2 { white-space: nowrap; word-spacing: -.2px; }
.visits { text-align: right; }
.sign { position: absolute; left: 4px; top: 1843px; width: 195px; height: 22px; border-radius: 4px; background: #ac8341; color: #fff; display: flex; align-items: center; padding-left: 4px; gap: 26px; z-index: 2; line-height: 24px; white-space: nowrap; }
.chat { position: absolute; left: 1221px; top: 1810px; width: 48px; height: 48px; border-radius: 12px; background: #24425f; box-shadow: 0 1px 4px rgba(0,0,0,.4); }
.chat svg { margin: 10px 0 0 10px; }
.chat .k { position: absolute; left: 1px; top: 17px; line-height: 12px; }
.side { position: absolute; left: 1243px; top: 754px; width: 37px; height: 362px; border: 1px solid #9aabbc; border-right: 0; padding-top: 1px; color: #24425f; }
.s { height: 36px; line-height: 14px; position: relative; white-space: nowrap; }
.s .k, .t .k { display: block; width: max-content; position: relative; z-index: 1; line-height: 13px; }
.tofu.big { position: absolute; left: 12px; top: 28px; width: 10px; height: 12px; opacity: .45; }
.tofu.tiny { position: absolute; left: 10px; top: 26px; width: 6px; height: 6px; }
.squig { position: absolute; left: 2px; top: 24px; }
.blob { position: absolute; left: 2px; top: 6px; width: 12px; height: 12px; border-radius: 50%; background: #d84a10; }
.t { height: 48px; padding-left: 7px; color: #ac8341; font-size: 10px; line-height: 13px; }
.side .t:nth-of-type(7) { margin-top: 8px; }
.t svg { margin: 1px 0 0 3px; }
.t .k { line-height: 12px; }
.t span { margin-left: 2px; display: block; }
.raq { margin: -14px 0 0 -17px; color: #ac8341; font-size: 10px; white-space: nowrap; line-height: 14px; padding-top: 1px; }
```
